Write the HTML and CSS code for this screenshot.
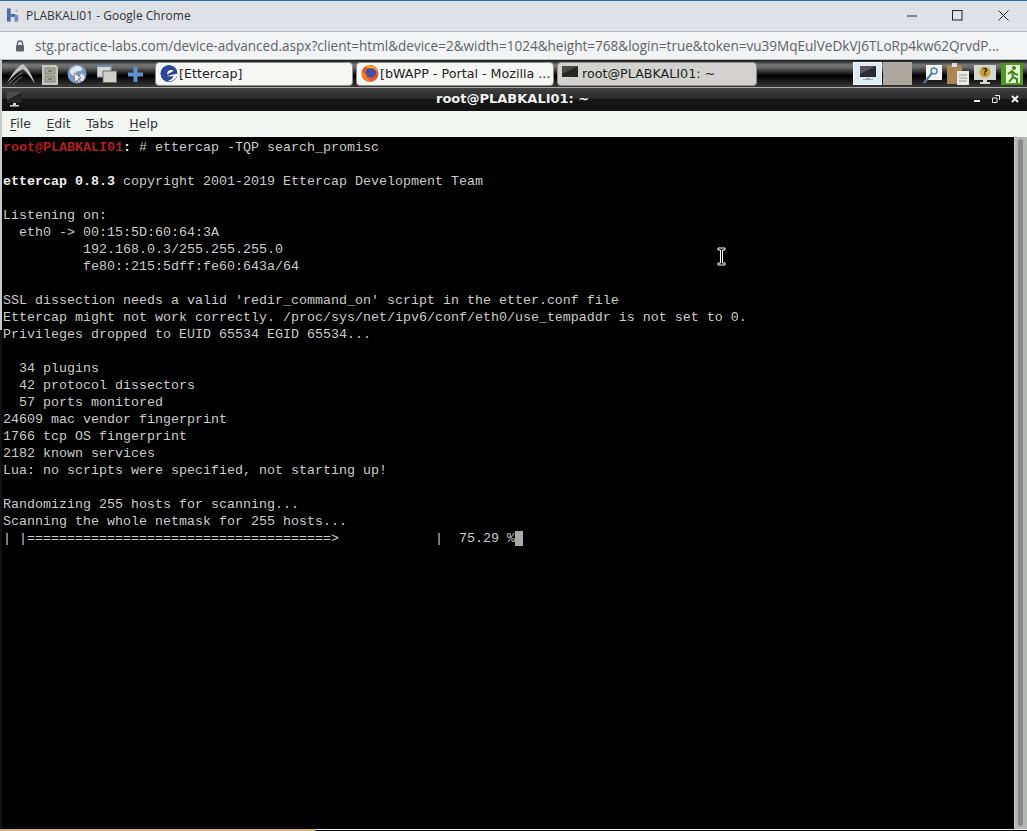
FILE: index.html
```html
<!DOCTYPE html>
<html lang="en">
<head>
<meta charset="utf-8">
<title>PLABKALI01 - Google Chrome</title>
<link rel="stylesheet" href="styles.css">
</head>
<body>
<header class="chrome-title">
  <svg class="favicon" viewBox="0 0 16 16"><rect x="1" y="1" width="4" height="14" fill="#4a6fa5"/><rect x="5" y="7" width="5" height="3" fill="#3f6391"/><rect x="9" y="8" width="4" height="7" fill="#6f8fb8"/><rect x="10" y="2" width="3" height="3" fill="#b4bcc6"/></svg>
  <span class="chrome-title-text">PLABKALI01 - Google Chrome</span>
  <span class="spacer"></span>
  <svg class="winctl winctl-min" viewBox="0 0 11 11"><path d="M0 6h10" stroke="#222" fill="none"/></svg>
  <svg class="winctl winctl-max" viewBox="0 0 11 11"><rect x=".5" y=".5" width="9.500" height="9.500" stroke="#222" fill="none"/></svg>
  <svg class="winctl winctl-close" viewBox="0 0 11 11"><path d="M.5.5l10 10M10.500.5l-10 10" stroke="#222" fill="none"/></svg>
</header>
<div class="chrome-url">
  <svg class="lock" viewBox="0 0 10 12"><path d="M2.500 5V3.500a2.500 2.500 0 0 1 5 0V5" stroke="#5f6368" stroke-width="1.300" fill="none"/><rect x="1" y="5" width="8" height="6.500" rx="1" fill="#5f6368"/></svg>
  <span class="url-text">stg.practice-labs.com/device-advanced.aspx?client=html&amp;device=2&amp;width=1024&amp;height=768&amp;login=true&amp;token=vu39MqEulVeDkVJ6TLoRp4kw62QrvdP...</span>
</div>
<main class="screen">
  <nav class="panel">
    <svg class="launch kali" viewBox="0 0 30 24"><path d="M18 2C23 6 27 13 30 22 26 16 22 10 18 7 13 9 8 14 2 21 7 12 12 5 18 2z" fill="#c4c4c4"/><g fill="none" stroke-linecap="round"><path d="M4 22C9 17 13 13 17 11" stroke="#8b8b8b"/><path d="M8 23c3-4 6-7 9-8" stroke="#6f6f6f"/></g></svg>
    <svg class="launch cabinet" viewBox="0 0 18 21"><path d="M1 1h14l2 2v18H1z" fill="#c3c6b8"/><rect x="4" y="4" width="10" height="6" fill="#a7a99c" stroke="#77796f" stroke-width=".8"/><rect x="4" y="12" width="10" height="6" fill="#a7a99c" stroke="#77796f" stroke-width=".8"/><path d="M7 7h4M7 15h4" stroke="#55564f"/></svg>
    <svg class="launch globe" viewBox="0 0 20 20"><circle cx="10" cy="10" r="9.500" fill="#7f9cc0"/><path d="M4 5c3-3 7-4 10-2 2 2 1 4-2 4S8 8 9 10s-3 2-5 0-1-3 0-5z" fill="#e4e8ee"/><path d="M14 10c3 0 4 2 3 5s-4 3-4 0 0-5 1-5z" fill="#dfe4ea"/><path d="M7 9l1 10 2-3 3 3 1-1-3-3 3-1z" fill="#fff" stroke="#39424d" stroke-width=".5"/></svg>
    <svg class="launch windows" viewBox="0 0 20 18"><rect x="0" y="1" width="14" height="11" fill="#d7dad2" stroke="#7f9cc0" stroke-width="1.200"/><rect x="0" y="0" width="14" height="2" fill="#6e90bb"/><rect x="6" y="6" width="13.500" height="11.500" fill="#cfd0c8" stroke="#6f6f6a"/></svg>
    <svg class="launch plus" viewBox="0 0 15 15"><path d="M5.500 0h4v5.500H15v4H9.500V15h-4V9.500H0v-4h5.500z" fill="#5d94cf"/></svg>
    <div class="tab tab-light">
      <svg class="tab-icon" viewBox="0 0 18 20"><circle cx="9" cy="10" r="9" fill="#2d4698"/><path d="M7 10c0-3 4-5 7-3l-7 4z" fill="#fff"/><path d="M6 13l12-3c-1 6-6 9-10 8 3-1 5-3 6-5z" fill="#fff"/></svg>
      <span class="tab-label">[Ettercap]</span>
    </div>
    <div class="tab tab-light">
      <svg class="tab-icon" viewBox="0 0 18 18"><circle cx="9" cy="9" r="8.500" fill="#e8522a"/><circle cx="10" cy="8" r="5" fill="#3f4fa8"/><path d="M4 2c5-3 12 0 13 7-2-4-5-6-9-5z" fill="#f6a623"/><path d="M1 8c0 6 5 9 10 9-4-2-6-4-7-8z" fill="#f08a24"/></svg>
      <span class="tab-label">[bWAPP - Portal - Mozilla ...</span>
    </div>
    <div class="tab tab-active">
      <svg class="tab-icon tab-icon-term" viewBox="0 0 16 15"><rect width="16" height="11" fill="#262626"/><path d="M0 0h16L0 8z" fill="#4a4a4a"/><path d="M6 12h4v1h3v1H3v-1h3z" fill="#c9c9c9"/></svg>
      <span class="tab-label">root@PLABKALI01: ~</span>
    </div>
    <span class="spacer"></span>
    <div class="pager pager-on"><svg class="pager-icon" viewBox="0 0 16 15"><rect width="16" height="11" fill="#2b2b2b"/><path d="M0 0h16L0 8z" fill="#555"/><path d="M6 12h4v1h3v1H3v-1h3z" fill="#9aa"/></svg></div>
    <div class="pager pager-off"></div>
    <svg class="tray tray-search" viewBox="0 0 19 20"><rect x="3" y="1" width="16" height="15" fill="#f4f4f2"/><circle cx="11" cy="7" r="3" fill="none" stroke="#4f7fb8" stroke-width="1.400"/><path d="M9 9L1 19" stroke="#4f7fb8" stroke-width="2.200"/></svg>
    <svg class="tray tray-clip" viewBox="0 0 22 22"><rect x="0" y="2" width="15" height="19" fill="#a98755"/><rect x="5" y="0" width="5" height="4" fill="#ddd"/><rect x="10" y="8" width="12" height="14" fill="#e8e8e4"/><path d="M12 12h8M12 15h8M12 18h8" stroke="#999"/></svg>
    <svg class="tray tray-lock" viewBox="0 0 22 21"><rect x="0" y="1" width="22" height="15" fill="#d5d8d2"/><circle cx="11" cy="8" r="5.500" fill="#c9a227"/><text class="tray-q" x="11" y="11">?</text><path d="M9 16h4v2h3v2H6v-2h3z" fill="#d5d8d2"/></svg>
    <svg class="tray tray-exit" viewBox="0 0 22 22"><rect width="22" height="22" fill="#4f9a1c"/><rect x="5" y="2" width="14" height="18" fill="#e6f2dc"/><circle cx="13" cy="5" r="2" fill="#3e8a14"/><path d="M7 11l4-3 3 3 3 1M11 9l1 5-4 5M12 14l4 2v4" stroke="#3e8a14" stroke-width="2" fill="none"/></svg>
  </nav>
  <section class="window">
    <div class="titlebar">
      <svg class="term-icon" viewBox="0 0 15 15"><rect width="15" height="11" fill="#272727"/><path d="M0 0h15L0 8z" fill="#4d4d4d"/><path d="M6 11h3v2h3v1.500H3V13h3z" fill="#d5d5d5"/></svg>
      <span class="titlebar-text">root@PLABKALI01: ~</span>
      <svg class="wm wm-min" viewBox="0 0 8 8"><rect x="1" y="5" width="6" height="2" fill="#eee"/></svg>
      <svg class="wm wm-max" viewBox="0 0 8 8"><path d="M3 .5h4.500V5M.5 3h4.500v4.500H.5z" fill="none" stroke="#eee"/></svg>
      <svg class="wm wm-close" viewBox="0 0 8 8"><path d="M1 1l6 6M7 1L1 7" stroke="#eee" stroke-width="2"/></svg>
    </div>
    <div class="menubar">
      <span class="menu-item"><u>F</u>ile</span>
      <span class="menu-item"><u>E</u>dit</span>
      <span class="menu-item"><u>T</u>abs</span>
      <span class="menu-item"><u>H</u>elp</span>
    </div>
    <div class="terminal">
<pre class="term-text"><b class="prompt">root@PLABKALI01</b><b>:</b> # ettercap -TQP search_promisc

<b>ettercap 0.8.3</b> copyright 2001-2019 Ettercap Development Team

Listening on:
  eth0 -&gt; 00:15:5D:60:64:3A
          192.168.0.3/255.255.255.0
          fe80::215:5dff:fe60:643a/64

SSL dissection needs a valid 'redir_command_on' script in the etter.conf file
Ettercap might not work correctly. /proc/sys/net/ipv6/conf/eth0/use_tempaddr is not set to 0.
Privileges dropped to EUID 65534 EGID 65534...

  34 plugins
  42 protocol dissectors
  57 ports monitored
24609 mac vendor fingerprint
1766 tcp OS fingerprint
2182 known services
Lua: no scripts were specified, not starting up!

Randomizing 255 hosts for scanning...
Scanning the whole netmask for 255 hosts...
| |======================================&gt;            |  75.29 %<span class="cursor"> </span></pre>
      <svg class="ibeam" viewBox="0 0 9 19"><path d="M1 1h7v2H5.500v13H8v2H1v-2h2.500V3H1z" fill="#000" stroke="#fff"/></svg>
      <div class="scrollbar"><div class="thumb"></div></div>
    </div>
    <div class="edge"><div class="edge-tan"></div><div class="edge-rest"></div></div>
  </section>
</main>
</body>
</html>
```

FILE: styles.css
```css
* { box-sizing: border-box; }
html, body { margin: 0; padding: 0; height: 100%; overflow: hidden; }
body {
  width: 1027px;
  height: 831px;
  display: flex;
  flex-direction: column;
  background: #000;
  font-family: "Open Sans", sans-serif;
}
svg { display: block; flex: none; }
.spacer { flex: 1; }

.chrome-title {
  height: 32px;
  flex: none;
  display: flex;
  align-items: center;
  background: #dee1e6;
  border-top: 1px solid #2b6ca6;
  border-bottom: 1px solid #b6b9bc;
  padding: 0 0 2px 6px;
}
.favicon { width: 15px; height: 16px; }
.chrome-title-text { margin-left: 5px; font-size: 12px; color: #333; }
.winctl { width: 11px; height: 11px; }
.winctl-max { margin-left: 34px; }
.winctl-close { margin-left: 35px; margin-right: 18px; }

.chrome-url {
  height: 28px;
  flex: none;
  display: flex;
  align-items: center;
  padding-left: 15px;
  background: #f1f3f4;
  border-bottom: 1px solid #bdbfc0;
  overflow: hidden;
}
.lock { width: 10px; height: 12px; }
.url-text { margin-left: 10px; font-size: 13.560px; color: #5f6368; white-space: nowrap; }

.screen {
  flex: 1;
  min-height: 0;
  display: flex;
  flex-direction: column;
  padding: 0 0 0 2px;
  background: linear-gradient(#c9c9c9 0, #c9c9c9 35%, #111 35%, #111 100%);
}

.panel {
  height: 28px;
  flex: none;
  display: flex;
  align-items: center;
  padding-left: 3px;
  padding-right: 4px;
  background: linear-gradient(#111 0, #777 18%, #666 28%, #000 58%, #111 70%, #3a3a3a 100%);
  border-bottom: 1px solid #aaa;
  font-family: "DejaVu Sans", sans-serif;
}
.launch { margin-top: 1px; }
.kali { width: 30px; height: 24px; }
.cabinet { width: 18px; height: 21px; margin-left: 6px; }
.globe { width: 20px; height: 20px; margin-left: 8px; }
.windows { width: 20px; height: 18px; margin-left: 10px; }
.plus { width: 15px; height: 15px; margin-left: 11px; }

.tab {
  width: 197.500px;
  height: 24px;
  margin-right: 3.500px;
  display: flex;
  align-items: center;
  padding-left: 4px;
  border: 1px solid #8f8f8a;
  border-radius: 4px;
  font-size: 12.700px;
  white-space: nowrap;
  overflow: hidden;
  color: #222;
}
.tab:first-of-type { margin-left: 12px; }
.tab-light { background: #f6f6f4; }
.tab-active { background: #d4d2ce; margin-right: 0; width: 199.500px; }
.tab-icon { width: 18px; height: 19px; }
.tab-label { margin-left: 1px; }
.tab-icon-term { width: 16px; height: 15px; margin-right: 3px; }

.pager { width: 29px; height: 23px; display: flex; align-items: center; justify-content: center; }
.pager-on { background: #dcebf7; border: 1px solid #f4f8fb; }
.pager-off { background: #aca79f; margin-left: 1px; }
.pager-icon { width: 16px; height: 15px; }
.tray { margin-top: 1px; }
.tray-search { width: 19px; height: 20px; margin-left: 11px; }
.tray-clip { width: 22px; height: 22px; margin-left: 5px; }
.tray-lock { width: 22px; height: 21px; margin-left: 5px; }
.tray-q { font: bold 9px "DejaVu Sans", sans-serif; text-anchor: middle; fill: #222; }
.tray-exit { width: 22px; height: 22px; margin-left: 5px; }

.window { flex: 1; min-height: 0; display: flex; flex-direction: column; }

.titlebar {
  height: 23px;
  flex: none;
  position: relative;
  display: flex;
  align-items: center;
  padding-left: 5px;
  background: linear-gradient(#424242 0, #2b2b2b 45%, #161616 50%, #111 100%);
}
.term-icon { width: 15px; height: 15px; }
.titlebar-text {
  position: absolute;
  left: 434px;
  top: 3px;
  font: bold 13px "DejaVu Sans", sans-serif;
  color: #f2f2f2;
  white-space: nowrap;
}
.wm { width: 8px; height: 8px; position: absolute; top: 7px; }
.wm-min { left: 971px; }
.wm-max { left: 990px; }
.wm-close { left: 1009px; }

.menubar {
  height: 26px;
  flex: none;
  display: flex;
  align-items: center;
  padding: 0 0 2px 8px;
  gap: 15.500px;
  background: #f2f6f3;
  font: 12.500px "DejaVu Sans", sans-serif;
  color: #2e3436;
}
.menu-item u { text-underline-offset: 2px; }

.terminal {
  flex: 1;
  min-height: 0;
  position: relative;
  background: #000;
  display: flex;
  overflow: hidden;
}
.term-text {
  flex: 1;
  margin: 0;
  padding: 2px 0 0 1px;
  font: 13.333px/17px "Liberation Mono", monospace;
  color: #cbcbcb;
}
.term-text b { color: #eee; }
.term-text .prompt { color: #b51c1c; }
.cursor { background: #aaa; }
.ibeam { position: absolute; left: 715px; top: 110px; width: 9px; height: 19px; }
.scrollbar {
  width: 13px;
  flex: none;
  padding: 2px 4px 3px 3px;
  background: #b4b7b4;
  border-left: 1px solid #c8cbc8;
}
.thumb { height: 100%; background: #8b8b8b; border-radius: 3px; }

.edge { height: 2px; flex: none; display: flex; margin-left: -2px; }
.edge-tan { width: 315px; background: #d6b56a; }
.edge-rest { flex: 1; background: #000; border-top: 1px solid #fff; }
```
